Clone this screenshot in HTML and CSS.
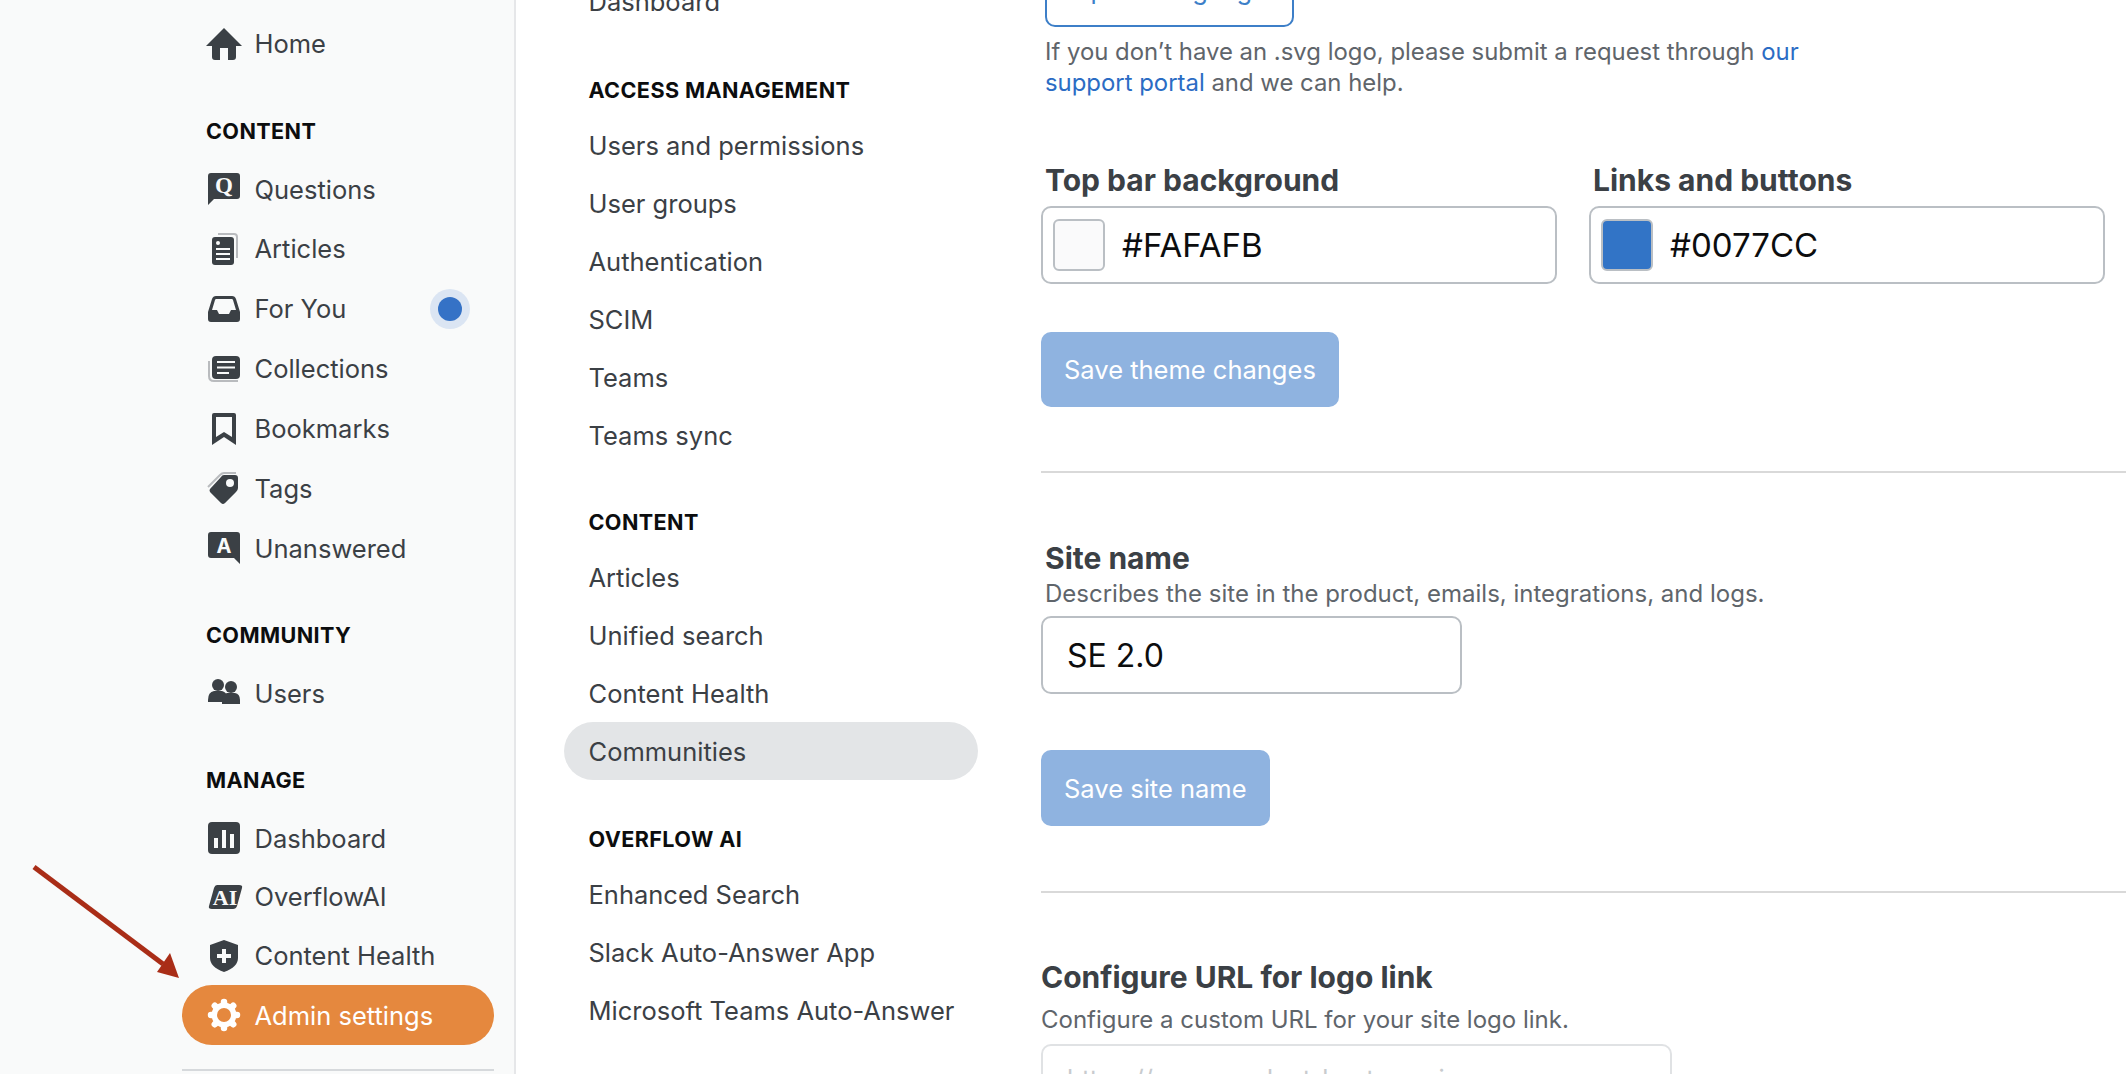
FILE: index.html
```html
<!DOCTYPE html>
<html lang="en">
<head>
  <meta charset="UTF-8">
  <title>Admin settings</title>
  <link rel="stylesheet" href="styles.css">
</head>
<body>

<div class="page">
  <!-- Main sidebar -->
  <nav class="sidebar">
    <a class="nav-item">
      <svg class="icon" viewBox="0 0 32 32"><path d="M16 0 L34 18 H28 V29 Q28 32 25 32 H20 V20 H12 V32 H7 Q4 32 4 29 V18 H-2 Z"/></svg>
      <span>Home</span>
    </a>

    <h4 class="nav-title">CONTENT</h4>
    <a class="nav-item">
      <svg class="icon" viewBox="0 0 32 32"><path d="M3 0 H29 Q32 0 32 3 V23 Q32 26 29 26 H6 L0 32 V3 Q0 0 3 0 Z"/><text class="glyph-q" x="16" y="20">Q</text></svg>
      <span>Questions</span>
    </a>
    <a class="nav-item">
      <svg class="icon" viewBox="0 0 32 32"><path d="M10 1 H26 Q29 1 29 4 V25" fill="none" stroke="#b9bbbe" stroke-width="2"/><rect x="4" y="4" width="22" height="28" rx="3"/><circle cx="10" cy="10" r="2" fill="#f9fafa"/><path d="M8 16 H22 M8 21 H22 M8 26 H22" stroke="#f9fafa" stroke-width="2"/></svg>
      <span>Articles</span>
    </a>
    <a class="nav-item">
      <svg class="icon" viewBox="0 -3 32 32"><path d="M8 0 H24 Q27 0 28 3 L32 16 V23 Q32 26 29 26 H3 Q0 26 0 23 V16 L4 3 Q5 0 8 0 Z M8 3 Q7.500 3 7 4 L4 14 H9 L11 18 H21 L23 14 H28 L25 4 Q24.500 3 24 3 Z" fill-rule="evenodd"/></svg>
      <span>For You</span>
      <i class="dot"></i>
    </a>
    <a class="nav-item">
      <svg class="icon" viewBox="0 -3 32 32"><path d="M1 5 V20 Q1 25 6 25 H30" fill="none" stroke="#b9bbbe" stroke-width="2"/><rect x="4" y="0" width="28" height="23" rx="4"/><path d="M9 6 H27 M9 11.500 H27 M9 17 H21" stroke="#f9fafa" stroke-width="2"/></svg>
      <span>Collections</span>
    </a>
    <a class="nav-item">
      <svg class="icon" viewBox="0 0 32 32"><path d="M6 0 H26 Q28 0 28 2 V32 L16 24 L4 32 V2 Q4 0 6 0 Z M8 4 V24 L16 19 L24 24 V4 Z" fill-rule="evenodd"/></svg>
      <span>Bookmarks</span>
    </a>
    <a class="nav-item">
      <svg class="icon" viewBox="0 0 32 32"><path d="M0 15 L12 3 Q14 1 16 1 H28" fill="none" stroke="#b9bbbe" stroke-width="2"/><path d="M16 3 H27 Q30 3 30 6 V16 Q30 18 28 20 L17 31 Q15 33 13 31 L2 20 Q1 18 2 17 L13 5 Q14 3 16 3 Z"/><circle cx="22" cy="11" r="4" fill="#f9fafa"/></svg>
      <span>Tags</span>
    </a>
    <a class="nav-item">
      <svg class="icon" viewBox="0 0 32 32"><path d="M3 0 H29 Q32 0 32 3 V32 L26 26 H3 Q0 26 0 23 V3 Q0 0 3 0 Z"/><text class="glyph-a" x="16" y="20.500">A</text></svg>
      <span>Unanswered</span>
    </a>

    <h4 class="nav-title">COMMUNITY</h4>
    <a class="nav-item">
      <svg class="icon" viewBox="0 -1 32 32"><circle cx="10" cy="7" r="6"/><path d="M0 22 Q0 14 6 13 H14 Q18 14 19 18 L15 20 V24 H0 Z"/><circle cx="23" cy="9" r="6"/><path d="M14 26 V21 Q15 16 19 15 H27 Q32 16 32 22 V26 Z"/></svg>
      <span>Users</span>
    </a>

    <h4 class="nav-title">MANAGE</h4>
    <a class="nav-item tight">
      <svg class="icon" viewBox="0 0 32 32"><rect width="32" height="32" rx="4"/><path d="M8 26 V16 M16 26 V8 M24 26 V12" stroke="#f9fafa" stroke-width="4"/></svg>
      <span>Dashboard</span>
    </a>
    <a class="nav-item tight">
      <svg class="icon" viewBox="0 0 32 32"><path d="M9 4 H31 Q35 4 34 7 L29 25 Q28 28 25 28 H4 Q0 28 1 25 L6 7 Q7 4 9 4 Z"/><text class="glyph-ai" x="17" y="23.500">AI</text></svg>
      <span>OverflowAI</span>
    </a>
    <a class="nav-item tight">
      <svg class="icon" viewBox="0 0 32 32"><path d="M16 0 L30 5 V18 Q30 27 16 32 Q2 27 2 18 V5 Z"/><path d="M16 9 V23 M9 16 H23" stroke="#f9fafa" stroke-width="4"/></svg>
      <span>Content Health</span>
    </a>
    <a class="nav-item tight admin">
      <svg class="icon gear" viewBox="0 0 32 32"><circle cx="16" cy="16" r="12.500"/><path d="M16 3 V29 M3 16 H29 M6.800 6.800 L25.200 25.200 M25.200 6.800 L6.800 25.200" stroke="#fff" stroke-width="6.500" stroke-linecap="round"/><circle cx="16" cy="16" r="7" fill="#e5883e"/></svg>
      <span>Admin settings</span>
    </a>
    <div class="nav-divider"></div>
  </nav>

  <!-- Admin sub menu -->
  <nav class="submenu">
    <a class="sub-item">Dashboard</a>

    <h4 class="sub-title">ACCESS MANAGEMENT</h4>
    <a class="sub-item">Users and permissions</a>
    <a class="sub-item">User groups</a>
    <a class="sub-item">Authentication</a>
    <a class="sub-item">SCIM</a>
    <a class="sub-item">Teams</a>
    <a class="sub-item">Teams sync</a>

    <h4 class="sub-title tight">CONTENT</h4>
    <a class="sub-item">Articles</a>
    <a class="sub-item">Unified search</a>
    <a class="sub-item">Content Health</a>
    <a class="sub-item active">Communities</a>

    <h4 class="sub-title last">OVERFLOW AI</h4>
    <a class="sub-item">Enhanced Search</a>
    <a class="sub-item">Slack Auto-Answer App</a>
    <a class="sub-item">Microsoft Teams Auto-Answer</a>
  </nav>

  <main class="content">
    <button class="upload-btn">Upload svg logo</button>
    <p class="hint">If you don’t have an .svg logo, please submit a request through <a>our support portal</a> and we can help.</p>

    <div class="color-row">
      <div class="color-field">
        <label>Top bar background</label>
        <div class="text-input color-input">
          <i class="swatch light"></i>
          <span>#FAFAFB</span>
        </div>
      </div>
      <div class="color-field">
        <label>Links and buttons</label>
        <div class="text-input color-input">
          <i class="swatch blue"></i>
          <span>#0077CC</span>
        </div>
      </div>
    </div>
    <button class="save-btn">Save theme changes</button>

    <hr class="section-line">

    <h3 class="field-title indent">Site name</h3>
    <p class="field-desc indent">Describes the site in the product, emails, integrations, and logs.</p>
    <div class="text-input name-input"><span>SE 2.0</span></div>
    <button class="save-btn name-save">Save site name</button>

    <hr class="section-line second">

    <h3 class="field-title url-title">Configure URL for logo link</h3>
    <p class="field-desc url-desc">Configure a custom URL for your site logo link.</p>
    <div class="text-input url-input"><span>https://your-product-host-service</span></div>
  </main>
</div>

<!-- Annotation arrow drawn on the screenshot -->
<svg class="arrow" viewBox="0 0 180 140">
  <path d="M34 10 L163 107" stroke="#a92d17" stroke-width="5"/>
  <path d="M179 121 L157 115 L170 96 Z" fill="#a92d17"/>
</svg>

</body>
</html>
```

FILE: styles.css
```css
* {
  box-sizing: border-box;
}

html,
body {
  height: 100%;
}

body {
  margin: 0;
  overflow: hidden;
  background-color: #ffffff;
  color: #3b4045;
  font-family: 'Inter', sans-serif;
  font-size: 25.5px;
}

h3,
h4,
p {
  margin: 0;
}

.page {
  display: flex;
  height: 1074px;
  overflow: hidden;
}

/* Main sidebar */
.sidebar {
  flex: none;
  width: 516px;
  padding: 14px 20px 0 182px;
  background-color: #f9fafa;
  border-right: 2px solid #e6e7e9;
}

.nav-item {
  display: flex;
  align-items: center;
  gap: 14.5px;
  height: 59.9px;
  padding-left: 26px;
  color: #3b4045;
}

.nav-item.tight {
  height: 58.9px;
}

.icon {
  flex: none;
  width: 32px;
  height: 32px;
  fill: #3b4045;
  overflow: visible;
}

.glyph-q,
.glyph-a,
.glyph-ai {
  fill: #f9fafa;
  font-weight: 700;
  text-anchor: middle;
}

.glyph-q {
  font-family: 'Liberation Serif', serif;
  font-size: 23px;
}

.glyph-a {
  font-family: 'Inter', sans-serif;
  font-size: 20px;
}

.glyph-ai {
  font-family: 'Liberation Serif', serif;
  font-size: 22px;
}

.nav-title {
  height: 36px;
  margin: 39px 0 10.2px 24px;
  line-height: 36px;
  font-size: 21.6px;
  font-weight: 700;
  letter-spacing: 0.4px;
  color: #0c0d0e;
}

.dot {
  width: 24px;
  height: 24px;
  margin-left: auto;
  margin-right: 32px;
  border-radius: 50%;
  background-color: #3572c6;
  box-shadow: 0 0 0 8px #dbe5f3;
}

.admin.tight {
  height: 60px;
  border-radius: 30px;
  background-color: #e5883e;
  color: #ffffff;
}

.gear {
  fill: #ffffff;
}

.nav-divider {
  height: 2px;
  margin-top: 24px;
  background-color: #d6d9dc;
}

/* Admin sub menu */
.submenu {
  flex: none;
  width: 525px;
  margin-top: -28px;
  padding: 0 63px 0 48px;
}

.sub-item {
  display: flex;
  align-items: center;
  height: 58px;
  padding-left: 24.5px;
  border-radius: 29px;
}

.sub-item.active {
  background-color: #e3e5e7;
}

.sub-title {
  height: 50px;
  margin: 35px 0 1px 24.5px;
  line-height: 50px;
  font-size: 21.6px;
  font-weight: 700;
  letter-spacing: 0.4px;
  color: #0c0d0e;
}

.sub-title.tight {
  margin-top: 33px;
}

.sub-title.last {
  margin-top: 34px;
}

/* Settings column */
.content {
  flex: 1;
  margin-top: -49px;
}

.upload-btn {
  display: block;
  width: 249px;
  height: 76px;
  margin-left: 4px;
  background: transparent;
  border: 2px solid #3d7fc8;
  border-radius: 10px;
  color: #3d7fc8;
  font-family: inherit;
  font-size: 25.5px;
}

.hint {
  width: 780px;
  margin: 9px 0 0 4px;
  line-height: 31px;
  font-size: 23.9px;
  color: #5f656b;
}

.hint a {
  color: #2b6cc4;
}

.color-row {
  display: flex;
  gap: 32px;
  margin-top: 61.5px;
}

.color-field {
  width: 516px;
}

.color-field label {
  display: block;
  height: 40px;
  margin-left: 4px;
  line-height: 40px;
  font-size: 30px;
  font-weight: 700;
}

.text-input {
  display: flex;
  align-items: center;
  background-color: #ffffff;
  border: 2px solid #babfc4;
  border-radius: 10px;
  color: #0c0d0e;
  font-size: 32px;
}

.color-input {
  height: 78px;
  gap: 17px;
  margin-top: 6px;
  padding-left: 10px;
  font-size: 33px;
}

.swatch {
  width: 52px;
  height: 52px;
  border: 2px solid #babfc4;
  border-radius: 6px;
}

.swatch.light {
  background-color: #fafafb;
}

.swatch.blue {
  background-color: #3274c6;
}

.save-btn {
  display: block;
  height: 75px;
  margin-top: 48px;
  padding: 0 23px;
  background-color: #8fb3e0;
  border: none;
  border-radius: 10px;
  color: #ffffff;
  font-family: inherit;
  font-size: 25.5px;
}

.save-btn.name-save {
  height: 76px;
  margin-top: 56px;
  padding-top: 2px;
}

.section-line {
  height: 2px;
  margin: 64px 0 0;
  background-color: #d9d9d9;
  border: none;
}

.section-line.second {
  margin-top: 65px;
}

.field-title {
  margin-top: 65px;
  line-height: 40px;
  font-size: 30px;
  font-weight: 700;
}

.indent {
  margin-left: 4px;
}

.field-desc {
  line-height: 32px;
  font-size: 24px;
  color: #5f656b;
}

.name-input {
  width: 421px;
  height: 78px;
  margin-top: 6px;
  padding: 2px 0 0 24px;
}

.url-title {
  margin-top: 64px;
}

.url-desc {
  margin-top: 7px;
}

.url-input {
  align-items: flex-start;
  width: 631px;
  height: 78px;
  margin-top: 8px;
  padding: 17px 0 0 24px;
  border-color: #e0e2e4;
  color: #c8cbce;
  font-size: 25.5px;
}

/* Annotation on top of the page */
.arrow {
  position: absolute;
  left: 0;
  top: 857px;
  width: 180px;
  height: 140px;
}
```
